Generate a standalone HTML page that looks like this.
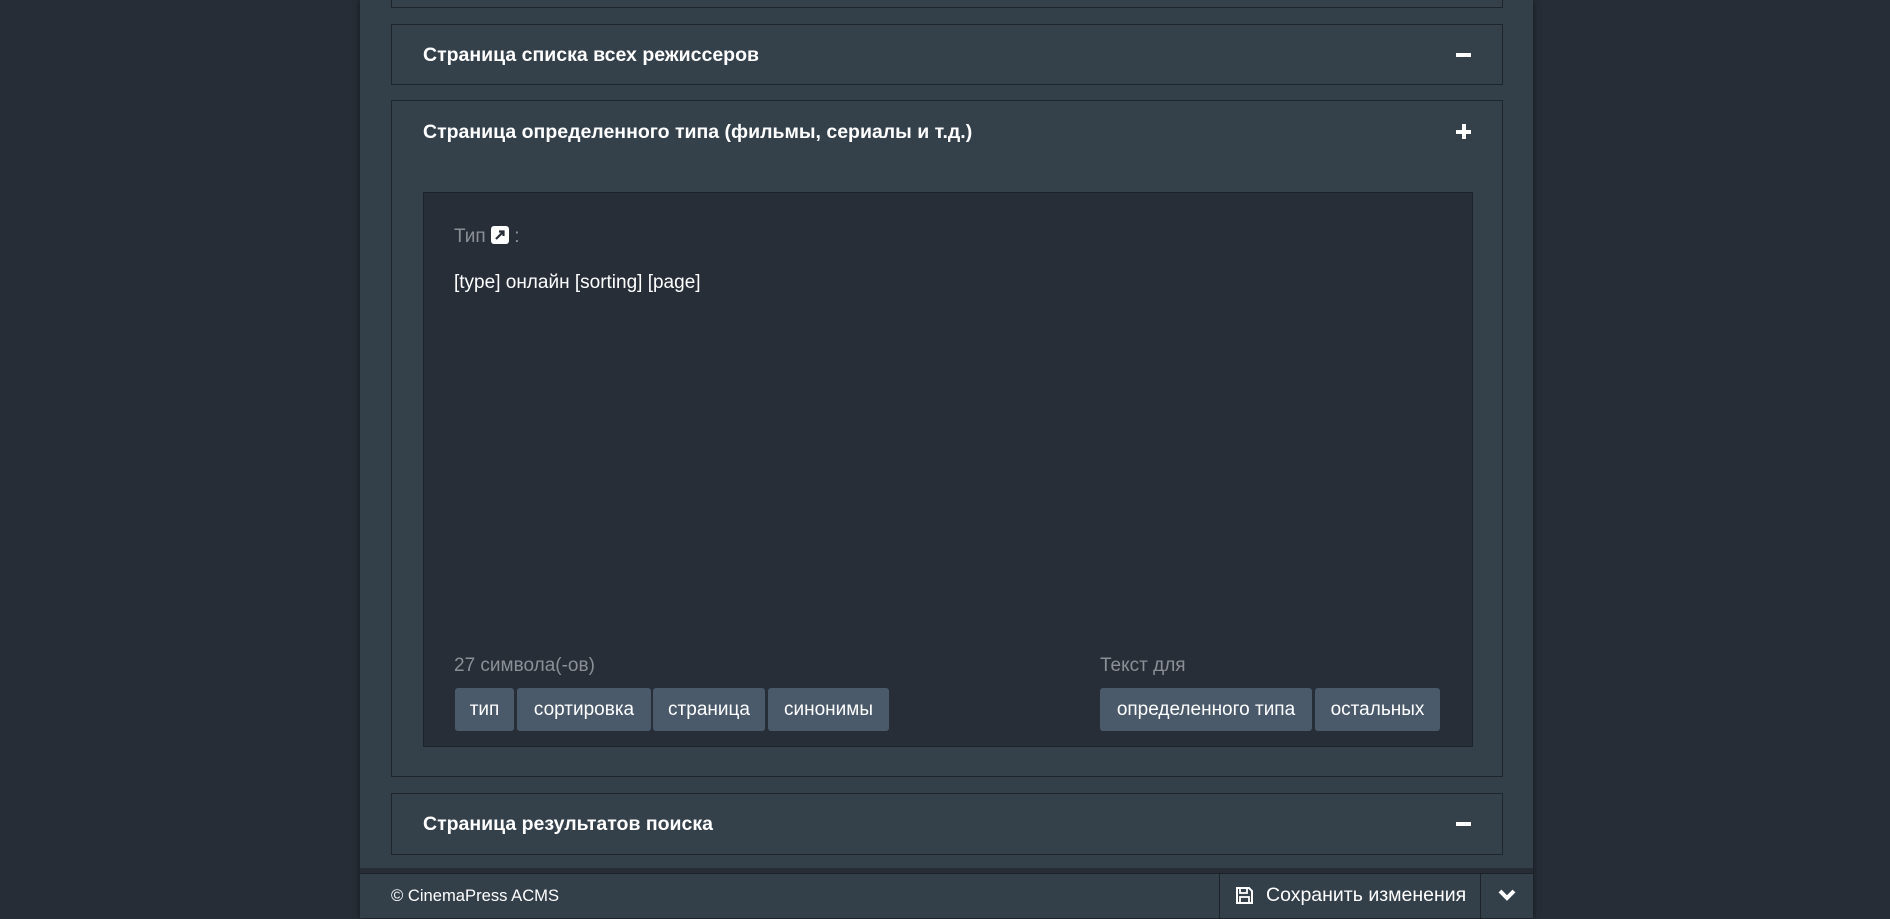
<!DOCTYPE html>
<html><head><meta charset="utf-8"><style>
*{box-sizing:border-box;margin:0;padding:0}
body{width:1890px;height:918px;background:#262d36;font-family:"Liberation Sans",Arial,sans-serif;position:relative;overflow:hidden;color:#fff}
.col{position:absolute;left:360px;top:0;width:1173px;height:918px;background:#333f49;box-shadow:0 0 6px rgba(0,0,0,.5)}
.p{position:absolute;left:31px;width:1112px;border:1px solid #1e252b;background:#34414b}
.t{position:absolute;left:31px;font-weight:bold;font-size:19.5px;line-height:22px}
.ic{position:absolute;left:1064px;background:#fff}
.inner{position:absolute;left:31px;top:91px;width:1050px;height:555px;background:#272e38;border:1px solid #1d232a}
.tag{position:absolute;top:495px;height:43px;background:#4a5a6b;border-radius:3px;font-size:19px;line-height:43px;text-align:center;color:#fff}
.gray{color:#8c9096;font-size:19px;position:absolute}
.foot{position:absolute;left:0;top:873px;width:1173px;height:45px;background:#333f49;border-top:1px solid #1c2228}
</style></head><body>
<div class="col">
 <div class="p" style="top:-10px;height:18px"></div>
 <div class="p" style="top:24px;height:61px">
  <div class="t" style="top:19px">Страница списка всех режиссеров</div>
  <div class="ic" style="top:28px;width:15px;height:4px"></div>
 </div>
 <div class="p" style="top:100px;height:677px">
  <div class="t" style="top:20px">Страница определенного типа (фильмы, сериалы и т.д.)</div>
  <div class="ic" style="top:29px;width:15px;height:4px"></div>
  <div class="ic" style="top:23px;left:1070px;width:4px;height:15px"></div>
  <div class="inner">
   <div class="gray" style="left:30px;top:33px">Тип <span style="display:inline-block;width:18px;height:18px;background:#fff;border-radius:3px;vertical-align:-2px;position:relative"><svg width="18" height="18" viewBox="0 0 18 18" style="position:absolute;left:0;top:0"><path d="M5 13L12 6M8 5.5h4.5V10" stroke="#272e38" stroke-width="2.2" fill="none"/></svg></span> :</div>
   <div style="position:absolute;left:30px;top:79px;font-size:19px;color:#fff">[type] онлайн [sorting] [page]</div>
   <div class="gray" style="left:30px;top:462px">27 символа(-ов)</div>
   <div class="tag" style="left:31px;width:59px">тип</div>
   <div class="tag" style="left:93px;width:134px">сортировка</div>
   <div class="tag" style="left:229px;width:112px">страница</div>
   <div class="tag" style="left:344px;width:121px">синонимы</div>
   <div class="gray" style="left:676px;top:462px">Текст для</div>
   <div class="tag" style="left:676px;width:212px">определенного типа</div>
   <div class="tag" style="left:891px;width:125px">остальных</div>
  </div>
 </div>
 <div class="p" style="top:793px;height:62px">
  <div class="t" style="top:19px">Страница результатов поиска</div>
  <div class="ic" style="top:28px;width:15px;height:4px"></div>
 </div>
 <div style="position:absolute;left:0;top:868px;width:1173px;height:5px;background:#262d34"></div>
 <div class="foot">
  <div style="position:absolute;left:31px;top:12px;font-size:16.6px">© CinemaPress ACMS</div>
  <div style="position:absolute;left:859px;top:0;width:262px;height:45px;border-left:1px solid #1c2228;border-right:1px solid #1c2228">
   <svg style="position:absolute;left:15px;top:12px" width="19" height="19" viewBox="0 0 19 19"><path d="M2 2h12l3 3v12H2z" fill="none" stroke="#fff" stroke-width="2"/><rect x="5" y="2" width="7" height="5" fill="none" stroke="#fff" stroke-width="1.8"/><rect x="5" y="11" width="9" height="6" fill="none" stroke="#fff" stroke-width="1.8"/></svg>
   <div style="position:absolute;left:46px;top:10px;font-size:19.5px">Сохранить изменения</div>
  </div>
  <svg style="position:absolute;left:1137px;top:13px" width="20" height="16" viewBox="0 0 20 16"><path d="M3 4l7 7 7-7" fill="none" stroke="#fff" stroke-width="4"/></svg>
 </div>
</div>
</body></html>
